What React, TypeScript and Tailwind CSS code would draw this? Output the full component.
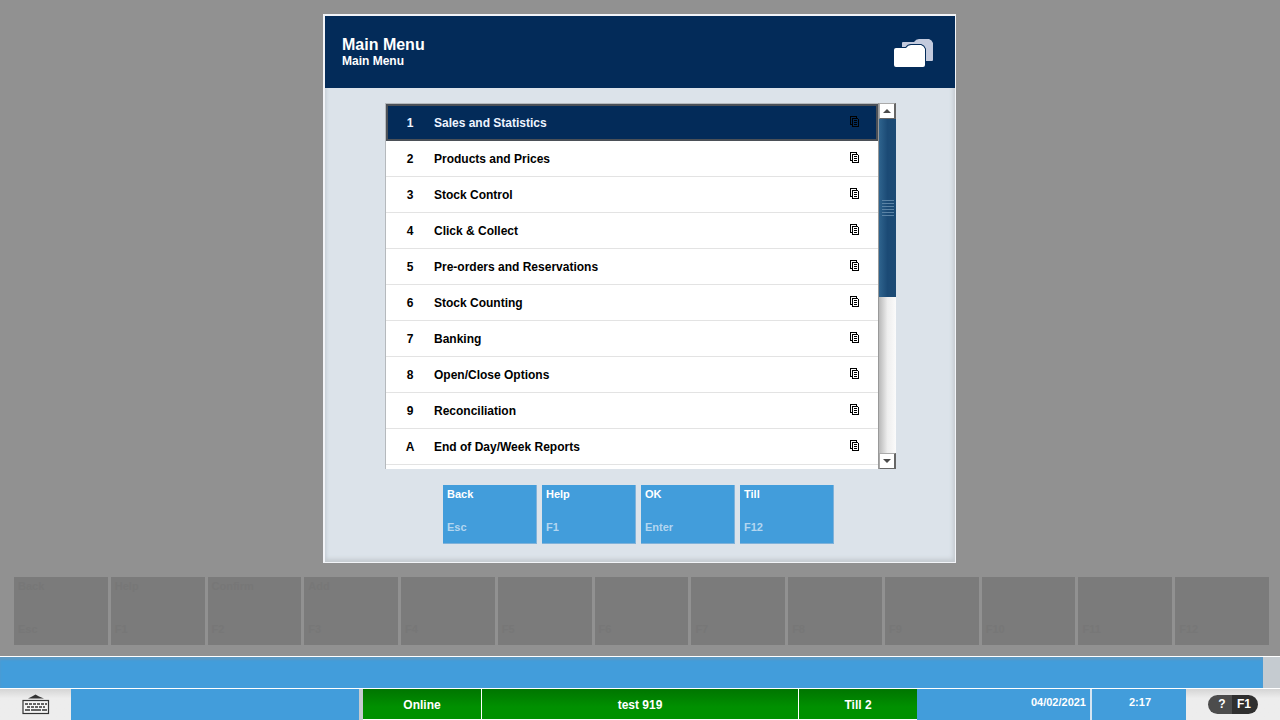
import type { ReactNode } from "react";

const menuItems: { key: string; label: string }[] = [
  { key: "1", label: "Sales and Statistics" },
  { key: "2", label: "Products and Prices" },
  { key: "3", label: "Stock Control" },
  { key: "4", label: "Click & Collect" },
  { key: "5", label: "Pre-orders and Reservations" },
  { key: "6", label: "Stock Counting" },
  { key: "7", label: "Banking" },
  { key: "8", label: "Open/Close Options" },
  { key: "9", label: "Reconciliation" },
  { key: "A", label: "End of Day/Week Reports" },
];

const actions = [
  { label: "Back", hint: "Esc" },
  { label: "Help", hint: "F1" },
  { label: "OK", hint: "Enter" },
  { label: "Till", hint: "F12" },
];

const functionKeys = [
  { label: "Back", hint: "Esc" },
  { label: "Help", hint: "F1" },
  { label: "Confirm", hint: "F2" },
  { label: "Add", hint: "F3" },
  { label: "", hint: "F4" },
  { label: "", hint: "F5" },
  { label: "", hint: "F6" },
  { label: "", hint: "F7" },
  { label: "", hint: "F8" },
  { label: "", hint: "F9" },
  { label: "", hint: "F10" },
  { label: "", hint: "F11" },
  { label: "", hint: "F12" },
];

function PagesIcon() {
  return (
    <svg viewBox="0 0 10 14" className="h-[14px] w-[10px]" fill="#000" shapeRendering="crispEdges" aria-hidden="true">
      <path d="M0 0H7V2H6V1H1V8H2V9H0Z" />
      <path fillRule="evenodd" d="M2 2H8V3H9V11H2ZM3 3V10H8V3Z" />
      <path d="M4 4H7V5H4ZM4 6H7V7H4ZM4 8H7V9H4Z" />
    </svg>
  );
}

function FoldersIcon() {
  return (
    <svg viewBox="0 0 40 30" className="h-[30px] w-10" aria-hidden="true">
      <path d="M8 4Q8 3 9 3H20Q22 0 25 0H35Q38 1 39 4V21Q39 22 38 22H8Z" fill="#c3cadd" />
      <path
        d="M0 11Q0 9 2 9H12Q14 6 17 6H27Q30 7 31 10V26Q31 28 29 28H2Q0 28 0 26Z"
        fill="#fff"
        stroke="#032b59"
        strokeWidth="2"
        paintOrder="stroke"
      />
    </svg>
  );
}

function KeyboardIcon() {
  return (
    <svg viewBox="0 0 28 21" className="h-[21px] w-7" aria-hidden="true">
      <path d="M6 4.5L10 2.5L13.5 0.5L17 2.5L22 4.5Z" fill="#333" />
      <rect x="1" y="6.500" width="25.500" height="13" fill="#f4f4f4" stroke="#333" strokeWidth="1.200" />
      <path d="M3 10H25" stroke="#333" strokeWidth="1.600" strokeDasharray="3 1" />
      <path d="M5 13H23" stroke="#333" strokeWidth="1.600" strokeDasharray="3 1" />
      <path d="M3 16H8M9 16H19M20 16H25" stroke="#333" strokeWidth="1.600" />
    </svg>
  );
}

function ScrollButton({ label, children }: { label: string; children: ReactNode }) {
  return (
    <button
      type="button"
      aria-label={label}
      className="flex h-4 shrink-0 items-center justify-center border border-t-[#aaa] border-l-[#aaa] border-r-2 border-r-[#666] border-b-[#666] bg-white"
    >
      <svg viewBox="0 0 8 4" className="h-1 w-2" fill="#4a4a4a" aria-hidden="true">
        {children}
      </svg>
    </button>
  );
}

function ScrollBar() {
  return (
    <div className="flex w-[18px] shrink-0 flex-col border-l border-[#999] bg-linear-to-r from-[#b9b9b9] via-[#eeeeee] to-[#fbfbfb]">
      <ScrollButton label="Scroll up">
        <path d="M0 4L4 0L8 4Z" />
      </ScrollButton>
      <div className="flex flex-1 flex-col">
        <div className="flex h-[178px] items-center justify-center bg-linear-to-r from-[#2f648e] via-[#1b4a75] to-[#1c4b75]">
          <div className="flex w-3 flex-col gap-0.5">
            {[0, 1, 2, 3, 4, 5].map((line) => (
              <span key={line} className="h-px bg-[#5b83a5]" />
            ))}
          </div>
        </div>
      </div>
      <ScrollButton label="Scroll down">
        <path d="M0 0H8L4 4Z" />
      </ScrollButton>
    </div>
  );
}

function MenuDialog() {
  return (
    <section
      role="dialog"
      aria-label="Main Menu"
      className="flex w-[633px] flex-col border-t-2 border-r border-b border-l-2 border-[#f2f4f8] bg-[#dce3ea] shadow-[inset_-2px_-3px_4px_#c5cbd0,inset_2px_0_3px_#cbd3dc]"
    >
      <header className="flex h-[72px] items-center justify-between bg-[#032b59] pr-[21px] pl-[17px] text-white">
        <div className="pt-0.5">
          <h1 className="text-base leading-4">Main Menu</h1>
          <p className="text-xs leading-4">Main Menu</p>
        </div>
        <div className="pt-1">
          <FoldersIcon />
        </div>
      </header>
      <div className="mt-[15px] mr-[59px] ml-[60px] flex h-[366px]">
        <ul className="min-w-0 flex-1 overflow-hidden border-t border-l border-[#b5b9bd] bg-white">
          {menuItems.map((item, index) => (
            <li key={item.key}>
              <button
                type="button"
                className={
                  index === 0
                    ? "flex h-[37px] w-full items-center border-2 border-[#4b5057] bg-[#032b59] pr-4 pl-[13px] text-left text-[#eef4ff]"
                    : "flex h-9 w-full items-center border-b border-[#e3e3e3] pr-[18px] pl-[15px] text-left text-black"
                }
              >
                <span className="w-[18px] text-center">{item.key}</span>
                <span className="ml-[15px] flex-1">{item.label}</span>
                <PagesIcon />
              </button>
            </li>
          ))}
        </ul>
        <ScrollBar />
      </div>
      <div className="mt-4 mb-[18px] flex justify-center gap-[5px] pr-[3px]">
        {actions.map((action) => (
          <button
            key={action.label}
            type="button"
            className="flex h-[59px] w-[94px] flex-col justify-between border-r border-b border-[#7fb2da] bg-[#429ddb] px-1 pt-0.5 pb-2 text-left text-[11px] leading-[15px] text-white"
          >
            <span>{action.label}</span>
            <span className="text-[#b3d6f0]">{action.hint}</span>
          </button>
        ))}
      </div>
    </section>
  );
}

function FunctionKeys() {
  return (
    <div className="grid grid-cols-13 gap-[3px] pr-[11px] pl-[14px]">
      {functionKeys.map((item) => (
        <button
          key={item.hint}
          type="button"
          disabled
          className="flex h-[68px] flex-col justify-between bg-[#7b7b7b] px-1 pt-0.5 pb-2 text-left text-[11px] leading-[15px] text-[#777777]"
        >
          <span>{item.label}</span>
          <span>{item.hint}</span>
        </button>
      ))}
    </div>
  );
}

function StatusBar() {
  return (
    <footer className="flex h-8 border-t border-white bg-[#ededed] text-white">
      <button
        type="button"
        aria-label="On-screen keyboard"
        className="flex w-[71px] items-center justify-center bg-linear-to-b from-[#d5d5d5] via-[#ededed] via-30% to-[#ededed]"
      >
        <KeyboardIcon />
      </button>
      <div className="w-72 bg-[#429ddb]" />
      <div className="w-1 bg-[#c5cbd0]" />
      <div className="flex flex-1 gap-px border-b border-white bg-white text-center leading-8">
        <div className="w-[118px] bg-linear-to-b from-[#007500] via-[#009000] via-60% to-[#009000]">Online</div>
        <div className="flex-1 bg-linear-to-b from-[#007500] via-[#009000] via-60% to-[#009000]">test 919</div>
        <div className="w-[118px] bg-linear-to-b from-[#007500] via-[#009000] via-60% to-[#009000]">Till 2</div>
      </div>
      <div className="flex w-[269px] gap-0.5 bg-[#d5e5f2] text-[11px] leading-[26px]">
        <time className="flex-1 bg-[#429ddb] pr-1 text-right">04/02/2021</time>
        <time className="w-[94px] bg-[#429ddb] pl-[2px] text-center">2:17</time>
      </div>
      <div className="flex w-[94px] items-center justify-center bg-linear-to-b from-[#d5d5d5] via-[#ededed] via-30% to-[#ededed]">
        <button type="button" className="flex h-[19px] w-[50px] overflow-hidden rounded-full leading-[19px]">
          <span className="w-6 bg-[#4c4c4c] pl-1 text-center">?</span>
          <span className="flex-1 bg-[#2f2f2f] pr-0.5 text-center">F1</span>
        </button>
      </div>
    </footer>
  );
}

export default function App() {
  return (
    <div className="flex min-h-screen flex-col justify-between bg-[#919191] font-['Liberation_Sans',Arial,sans-serif] text-xs font-bold">
      <main className="flex justify-center pt-[14px] pr-px">
        <MenuDialog />
      </main>
      <div>
        <FunctionKeys />
        <div className="mt-[11px] flex h-8 border-t border-white bg-[#c5cbd0]">
          <div className="mr-[17px] flex-1 bg-[#429ddb] shadow-[inset_0_3px_2px_#5c9ac5]" />
        </div>
        <StatusBar />
      </div>
    </div>
  );
}
